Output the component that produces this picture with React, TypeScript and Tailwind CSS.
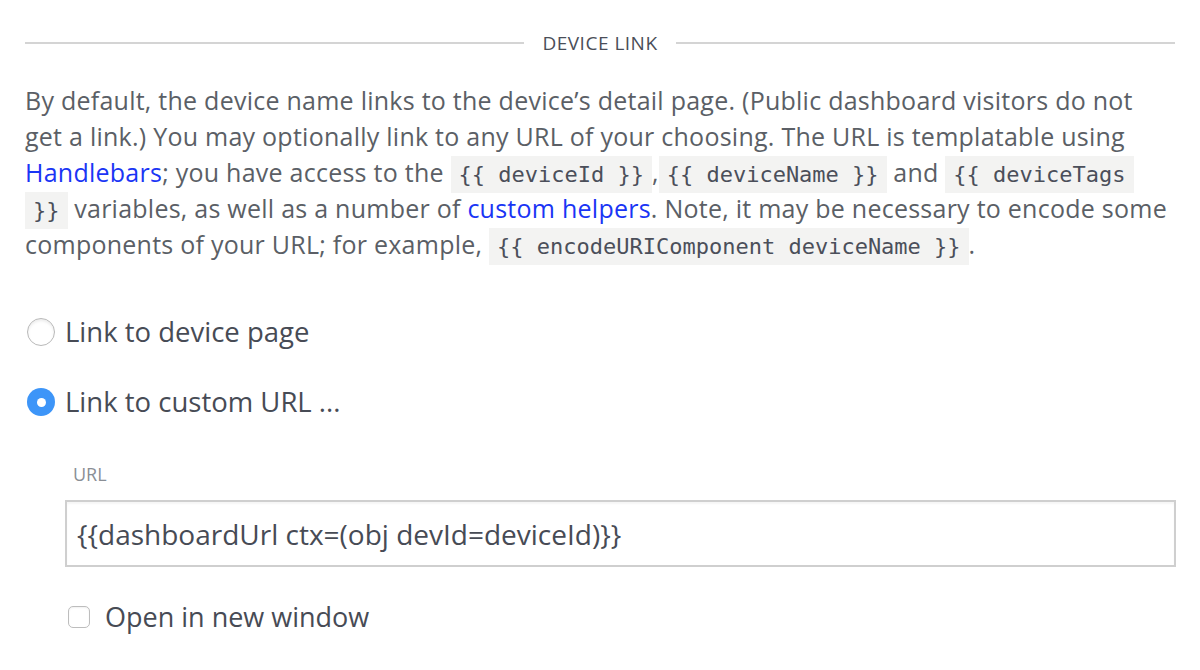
import React, { useState } from "react";

const Code = ({ children }: { children: React.ReactNode }) => (
  <code className="bg-[#f3f3f2] px-[8px] py-[6px] text-[#4b4f5a] font-['DejaVu_Sans_Mono',monospace] text-[22px] leading-none tracking-normal [box-decoration-break:clone]">
    {children}
  </code>
);

const A = ({ children }: { children: React.ReactNode }) => (
  <a href="#" className="text-[#1a35f5]">
    {children}
  </a>
);

export default function App() {
  const [mode, setMode] = useState<"device" | "custom">("custom");
  const [url, setUrl] = useState("{{dashboardUrl ctx=(obj devId=deviceId)}}");
  const [newWindow, setNewWindow] = useState(false);

  return (
    <div className="w-[1200px] h-[670px] bg-white px-[25px] pt-[30px] font-['Open_Sans',sans-serif] text-[#5b5f66] overflow-hidden">
      {/* section header */}
      <div className="flex items-center gap-[18px]">
        <div className="flex-1 h-[2px] bg-[#d4d4d4]" />
        <span className="text-[19px] font-medium tracking-[0.5px] text-[#4a4e58] leading-[26px]">DEVICE LINK</span>
        <div className="flex-1 h-[2px] bg-[#d4d4d4]" />
      </div>

      <p className="mt-[26px] text-[25px] leading-[36px] tracking-[0.25px]">
        By default, the device name links to the device’s detail page. (Public dashboard visitors do not
        <br />
        get a link.) You may optionally link to any URL of your choosing. The URL is templatable using
        <br />
        <A>Handlebars</A>; you have access to the <Code>{"{{ deviceId }}"}</Code>,<Code>{"{{ deviceName }}"}</Code> and{" "}
        <Code>
          {"{{ deviceTags"}
          <br />
          {"}}"}
        </Code>{" "}
        variables, as well as a number of <A>custom helpers</A>. Note, it may be necessary to encode some
        <br />
        components of your URL; for example, <Code>{"{{ encodeURIComponent deviceName }}"}</Code>.
      </p>

      <div className="mt-[56px] flex flex-col gap-[42px]">
        <label className="flex items-center gap-[10px] ml-[2px] cursor-pointer" onClick={() => setMode("device")}>
          <span
            className={
              mode === "device"
                ? "w-[28px] h-[28px] shrink-0 rounded-full bg-[#3d95f8] flex items-center justify-center"
                : "w-[28px] h-[28px] shrink-0 rounded-full border-[1.5px] border-[#b9b9b9] bg-white shadow-[inset_0_2px_3px_rgba(0,0,0,0.08)]"
            }
          >
            {mode === "device" && <span className="w-[9px] h-[9px] rounded-full bg-white" />}
          </span>
          <span className="text-[27.5px] text-[#474b55] leading-[28px]">Link to device page</span>
        </label>
        <label className="flex items-center gap-[10px] ml-[2px] cursor-pointer" onClick={() => setMode("custom")}>
          <span
            className={
              mode === "custom"
                ? "w-[28px] h-[28px] shrink-0 rounded-full bg-[#3d95f8] flex items-center justify-center"
                : "w-[28px] h-[28px] shrink-0 rounded-full border-[1.5px] border-[#b9b9b9] bg-white shadow-[inset_0_2px_3px_rgba(0,0,0,0.08)]"
            }
          >
            {mode === "custom" && <span className="w-[9px] h-[9px] rounded-full bg-white" />}
          </span>
          <span className="text-[27.5px] text-[#474b55] leading-[28px]">Link to custom URL ...</span>
        </label>
      </div>

      <div className="ml-[40px] mt-[46px] w-[1111px]">
        <div className="pl-[8px] text-[18px] font-medium text-[#8a8e95] leading-[24px]">URL</div>
        <input
          value={url}
          onChange={(e) => setUrl(e.target.value)}
          className="mt-[14px] w-full h-[67px] border-2 border-[#cfcfcf] px-[10px] text-[28px] text-[#474b55] outline-none shadow-[inset_0_2px_2px_rgba(0,0,0,0.04)]"
        />
        <div
          className="mt-[36px] flex items-center gap-[15px] ml-[3px] cursor-pointer"
          onClick={() => setNewWindow(!newWindow)}
        >
          <span
            className={
              newWindow
                ? "block shrink-0 w-[22px] h-[22px] rounded-[5px] bg-[#3d95f8]"
                : "block shrink-0 w-[22px] h-[22px] rounded-[5px] border-[1.5px] border-[#bdbdbd] bg-white shadow-[inset_0_1px_2px_rgba(0,0,0,0.06)]"
            }
          />
          <span className="text-[27px] text-[#474b55] leading-[28px]">Open in new window</span>
        </div>
      </div>
    </div>
  );
}
